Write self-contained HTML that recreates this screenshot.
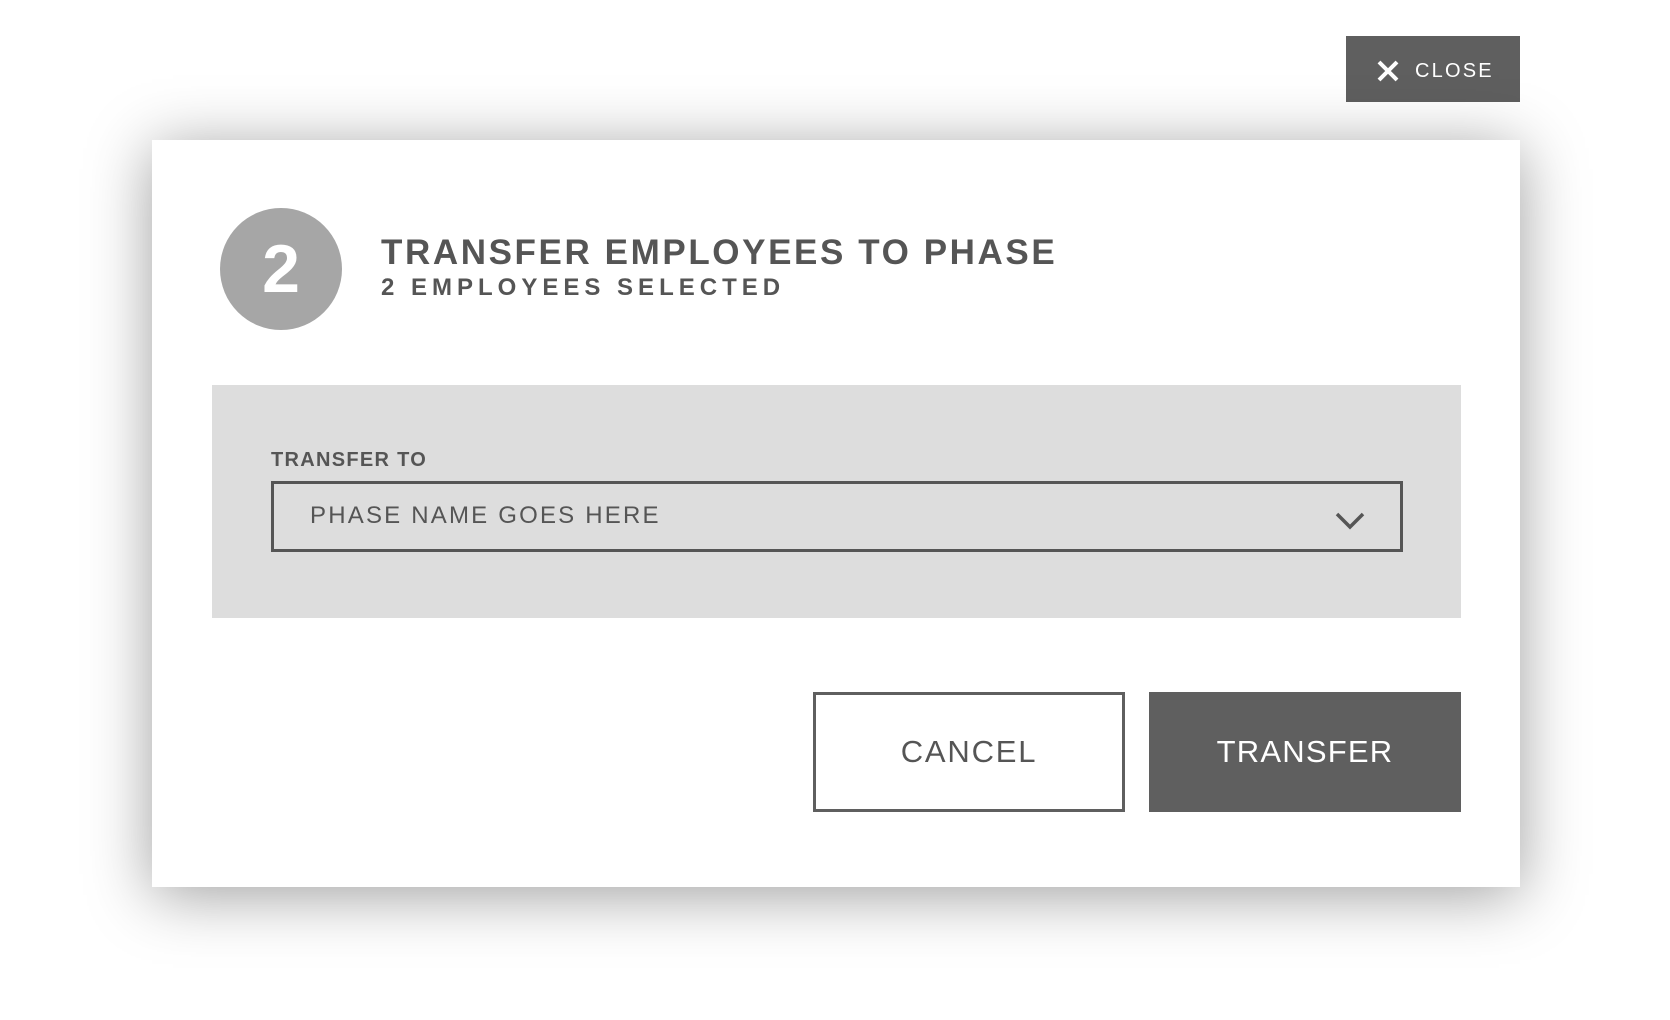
<!DOCTYPE html>
<html><head><meta charset="utf-8"><style>
*{margin:0;padding:0;box-sizing:border-box}
body{width:1670px;height:1020px;background:#fff;position:relative;overflow:hidden;font-family:"Liberation Sans",sans-serif;color:#555}
.close{position:absolute;left:1346px;top:36px;width:174px;height:66px;background:#5f5f5f;color:#fff;font-size:20px;letter-spacing:2.2px}
.close svg{position:absolute;left:31px;top:24px}
.close span{position:absolute;left:69px;top:24px;line-height:22px}
.modal{position:absolute;left:152px;top:140px;width:1368px;height:747px;background:#fff;box-shadow:0 8px 60px rgba(0,0,0,.38)}
.circle{position:absolute;left:220px;top:208px;width:122px;height:122px;border-radius:50%;background:#a6a6a6;color:#fff;font-size:68px;font-weight:bold;text-align:center;line-height:122px}
.t1{position:absolute;left:381px;top:233px;font-size:35px;font-weight:bold;letter-spacing:2.6px;line-height:40px;white-space:nowrap}
.t2{position:absolute;left:381px;top:274px;font-size:24px;font-weight:bold;letter-spacing:5px;line-height:28px;white-space:nowrap}
.panel{position:absolute;left:212px;top:385px;width:1249px;height:233px;background:#dddddd}
.lab{position:absolute;left:271px;top:449px;font-size:20px;font-weight:bold;letter-spacing:1.3px;line-height:22px}
.sel{position:absolute;left:271px;top:481px;width:1132px;height:71px;border:3px solid #555}
.sel span{position:absolute;left:36px;top:18px;font-size:24px;letter-spacing:2.2px;line-height:28px}
.sel svg{position:absolute;left:1061px;top:27px}
.btn{position:absolute;top:692px;width:312px;height:120px;font-size:31px;text-align:center;line-height:114px}
.cancel{left:813px;border:3px solid #5f5f5f;background:#fff;color:#555;letter-spacing:1.8px}
.transfer{left:1149px;background:#5f5f5f;color:#fff;line-height:120px;letter-spacing:1.2px}
</style></head><body>
<div class="close"><svg width="22" height="22" viewBox="0 0 22 22"><path d="M2 2L20 20M20 2L2 20" stroke="#fff" stroke-width="4"/></svg><span>CLOSE</span></div>
<div class="modal"></div>
<div class="circle">2</div>
<div class="t1">TRANSFER EMPLOYEES TO PHASE</div>
<div class="t2">2 EMPLOYEES SELECTED</div>
<div class="panel"></div>
<div class="lab">TRANSFER TO</div>
<div class="sel"><span>PHASE NAME GOES HERE</span><svg width="30" height="20" viewBox="0 0 30 20"><path d="M2 3L15 16L28 3" fill="none" stroke="#555" stroke-width="3.5"/></svg></div>
<div class="btn cancel">CANCEL</div>
<div class="btn transfer">TRANSFER</div>
</body></html>
